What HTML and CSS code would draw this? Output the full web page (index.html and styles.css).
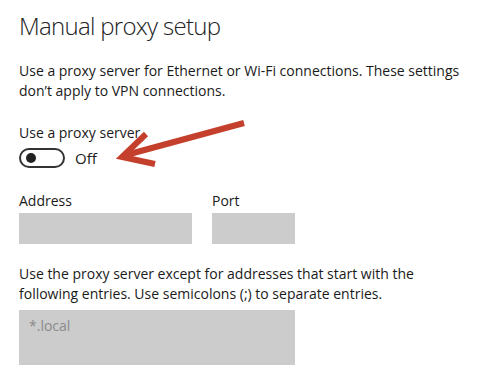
FILE: index.html
```html
<!DOCTYPE html>
<html>
<head>
<meta charset="utf-8">
<link rel="stylesheet" href="styles.css">
</head>
<body>
<div class="page">
  <h1 class="title">Manual proxy setup</h1>
  <p class="desc">Use a proxy server for Ethernet or Wi-Fi connections. These settings don’t apply to VPN connections.</p>
  <div class="label use-label">Use a proxy server</div>
  <div class="toggle-row">
    <span class="toggle"><span class="knob"></span></span>
    <span class="toggle-text">Off</span>
  </div>
  <div class="fields">
    <div class="field">
      <div class="label">Address</div>
      <div class="input addr"></div>
    </div>
    <div class="field">
      <div class="label">Port</div>
      <div class="input port"></div>
    </div>
  </div>
  <p class="desc desc2">Use the proxy server except for addresses that start with the following entries. Use semicolons (;) to separate entries.</p>
  <div class="input exceptions"><span class="placeholder">*.local</span></div>
  <svg class="arrow" width="494" height="380" viewBox="0 0 494 380">
    <g stroke="#c4402c" stroke-width="6" fill="none" stroke-linecap="butt" stroke-linejoin="miter">
      <line x1="244" y1="123" x2="126" y2="155"/>
      <polyline points="146,134 122,157 155,164"/>
    </g>
  </svg>
</div>
</body>
</html>
```
FILE: styles.css
```css
html, body {
  margin: 0;
  padding: 0;
  background: #fff;
}
.page {
  position: relative;
  width: 494px;
  height: 380px;
  box-sizing: border-box;
  padding: 9px 19px 0 19px;
  font-family: "Open Sans", "Noto Sans", sans-serif;
  color: #1a1a1a;
  overflow: hidden;
}
.title {
  margin: 0;
  font-weight: 300;
  font-size: 24px;
  letter-spacing: -0.7px;
  line-height: 34px;
  color: #222;
}
.desc {
  margin: 18px 0 0 0;
  font-size: 14px;
  line-height: 20px;
  width: 448px;
}
.label {
  font-size: 14px;
  line-height: 20px;
}
.use-label {
  margin-top: 22px;
}
.toggle-row {
  display: flex;
  align-items: center;
  gap: 10px;
  margin-top: 5px;
}
.toggle {
  width: 46px;
  height: 20px;
  box-sizing: border-box;
  border: 2px solid #333;
  border-radius: 10px;
  display: flex;
  align-items: center;
  padding-left: 5px;
}
.knob {
  width: 10px;
  height: 10px;
  border-radius: 50%;
  background: #222;
}
.toggle-text {
  font-size: 15px;
  line-height: 20px;
}
.fields {
  display: flex;
  gap: 20px;
  margin-top: 23px;
}
.input {
  background: #cccccc;
  height: 31px;
  margin-top: 2px;
}
.addr { width: 173px; }
.port { width: 83px; }
.desc2 {
  margin-top: 20px;
}
.exceptions {
  width: 276px;
  height: 55px;
  margin-top: 6px;
  box-sizing: border-box;
  padding: 4px 10px;
}
.placeholder {
  font-size: 14px;
  color: #8a8a8a;
}
.arrow {
  position: absolute;
  left: 0;
  top: 0;
  pointer-events: none;
}
```
